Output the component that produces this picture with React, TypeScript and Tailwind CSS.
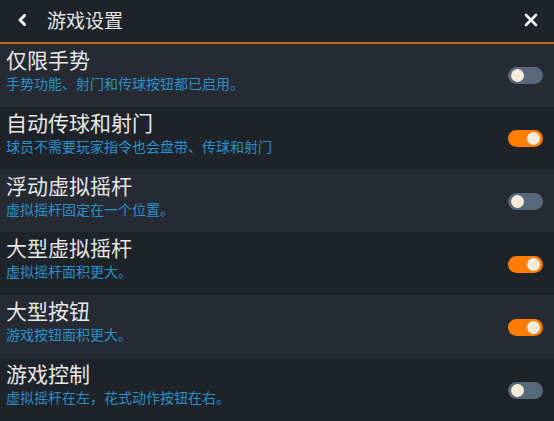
import React, { useState } from "react";

type Setting = {
  id: string;
  title: string;
  desc: string;
  on: boolean;
};

const initialSettings: Setting[] = [
  { id: "gesture", title: "仅限手势", desc: "手势功能、射门和传球按钮都已启用。", on: false },
  { id: "auto", title: "自动传球和射门", desc: "球员不需要玩家指令也会盘带、传球和射门", on: true },
  { id: "float", title: "浮动虚拟摇杆", desc: "虚拟摇杆固定在一个位置。", on: false },
  { id: "bigstick", title: "大型虚拟摇杆", desc: "虚拟摇杆面积更大。", on: true },
  { id: "bigbtn", title: "大型按钮", desc: "游戏按钮面积更大。", on: true },
  { id: "control", title: "游戏控制", desc: "虚拟摇杆在左，花式动作按钮在右。", on: false },
];

const Toggle: React.FC<{ on: boolean; onClick: () => void }> = ({ on, onClick }) => (
  <button
    onClick={onClick}
    className={`relative h-[17px] w-[35px] shrink-0 rounded-full ${
      on ? "bg-[#ff7d00]" : "bg-[#566879]"
    }`}
  >
    <span
      className={`absolute top-[2px] h-[13px] w-[13px] rounded-full bg-[#f4ecda] ${
        on ? "right-[3px]" : "left-[3px]"
      }`}
    />
  </button>
);

const App: React.FC = () => {
  const [settings, setSettings] = useState<Setting[]>(initialSettings);

  const toggle = (id: string) => {
    setSettings((prev) => prev.map((s) => (s.id === id ? { ...s, on: !s.on } : s)));
  };

  return (
    <div
      className="flex h-[421px] w-full flex-col bg-[#1e2229] text-[#e8e8e8]"
      style={{ fontFamily: '"Noto Sans CJK SC", "Noto Sans", sans-serif' }}
    >
      <div className="flex h-[44px] shrink-0 items-center border-b-2 border-[#c9640f] bg-[#1e2229] pb-[2px]">
        <button className="ml-[17px] flex h-[12px] w-[10px] items-center justify-center">
          <svg width="10" height="12" viewBox="0 0 10 12">
            <path d="M7.5 1.5 L3 6 L7.5 10.5" fill="none" stroke="#f2f2f2" strokeWidth="3" strokeLinecap="round" strokeLinejoin="round" />
          </svg>
        </button>
        <h1 className="ml-[20px] text-[19px] leading-[24px] text-[#e6e6e6]">游戏设置</h1>
        <button className="ml-auto mr-[16px] flex h-[14px] w-[14px] items-center justify-center">
          <svg width="14" height="14" viewBox="0 0 14 14">
            <path d="M2 2 L12 12 M12 2 L2 12" stroke="#f4f4f4" strokeWidth="2.6" strokeLinecap="round" />
          </svg>
        </button>
      </div>
      <ul className="flex flex-1 flex-col">
        {settings.map((s, i) => (
          <li
            key={s.id}
            className={`flex flex-1 items-start pl-[6px] pr-[11px] pt-[4px] ${
              i % 2 === 0 ? "bg-[#252a33]" : "bg-[#1e2229]"
            }`}
          >
            <div className="flex flex-1 flex-col">
              <span className="text-[21px] leading-[22px] text-[#e8e8e8]">{s.title}</span>
              <span className="mt-[5px] text-[14px] leading-[16px] text-[#2b91cd]">{s.desc}</span>
            </div>
            <div className="self-center">
              <Toggle on={s.on} onClick={() => toggle(s.id)} />
            </div>
          </li>
        ))}
      </ul>
    </div>
  );
};

export default App;
